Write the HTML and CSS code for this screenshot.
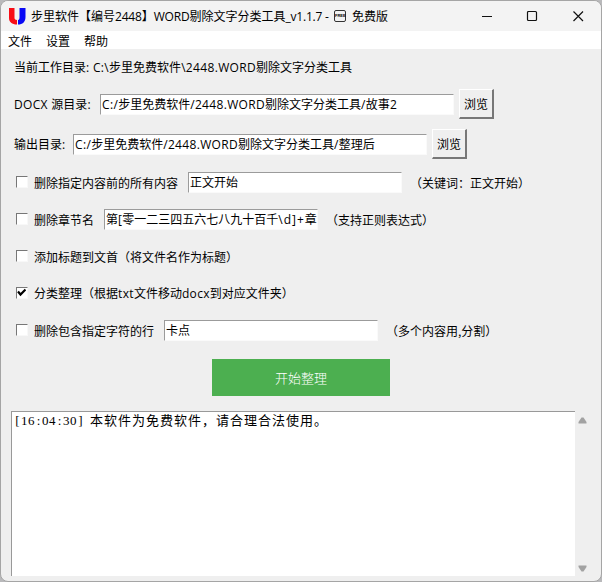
FILE: index.html
```html
<!DOCTYPE html>
<html lang="zh-CN">
<head>
<meta charset="utf-8">
<title>步里软件</title>
<link rel="stylesheet" href="styles.css">
</head>
<body>
<div class="window">
  <header class="titlebar">
    <svg class="logo" width="17" height="17" viewBox="0 0 17 17">
      <path d="M0 0H5.500V10C5.500 11.300 6.500 12 8 12V16.500C3 16.500 0 14 0 10Z" fill="#f80d16"/>
      <path d="M10.500 0H16.500V9C16.500 14 13.500 16.500 9 16.500V12C10.200 12 10.500 11 10.500 9Z" fill="#0909f5"/>
    </svg>
    <span class="title">步里软件【编号<span class="lat">2448</span>】<span class="lat">WORD</span>剔除文字分类工具<span class="lat">_v1.1.7 - </span></span>
    <span class="free">FREE</span>
    <span class="edition">免费版</span>
    <svg class="controls" width="105" height="12" viewBox="0 0 105 12" fill="none" stroke="#111" stroke-width="1.200">
      <path d="M1 6.500H11"/>
      <rect x="46.500" y="1.500" width="9" height="9" rx="1"/>
      <path d="M92.500 1.500L102 11M102 1.500L92.500 11"/>
    </svg>
  </header>
  <nav class="menu"><span>文件</span><span>设置</span><span>帮助</span></nav>
  <main class="content">
    <div class="cwd">当前工作目录<span class="lat">: C:\</span>步里免费软件<span class="lat">\2448.WORD</span>剔除文字分类工具</div>
    <div class="path-row">
      <span class="label-docx"><span class="lat">DOCX </span>源目录<span class="lat">:</span></span>
      <div class="entry path"><span class="lat">C:/</span>步里免费软件<span class="lat">/2448.WORD</span>剔除文字分类工具<span class="lat">/</span>故事<span class="lat">2</span></div>
      <button class="browse">浏览</button>
    </div>
    <div class="path-row">
      <span class="label-out">输出目录<span class="lat">:</span></span>
      <div class="entry path"><span class="lat">C:/</span>步里免费软件<span class="lat">/2448.WORD</span>剔除文字分类工具<span class="lat">/</span>整理后</div>
      <button class="browse">浏览</button>
    </div>
    <div class="options">
      <div class="option"><i class="check"></i><span class="opt-before">删除指定内容前的所有内容</span><div class="entry">正文开始</div><span class="hint">（关键词：正文开始）</span></div>
      <div class="option"><i class="check"></i><span class="opt-chapter">删除章节名</span><div class="entry">第<span class="lat">[</span>零一二三四五六七八九十百千<span class="lat pattern">\d]+</span>章</div><span class="hint">（支持正则表达式）</span></div>
      <div class="option"><i class="check"></i><span>添加标题到文首（将文件名作为标题）</span></div>
      <div class="option"><i class="check"><svg width="9" height="9" viewBox="0 0 9 9"><path d="M1 3.500L3.500 6.500L8.500 1.500" fill="none" stroke="#000" stroke-width="2.200"/></svg></i><span>分类整理（根据<span class="lat">txt</span>文件移动<span class="lat">docx</span>到对应文件夹）</span></div>
      <div class="option"><i class="check"></i><span class="opt-line">删除包含指定字符的行</span><div class="entry">卡点</div><span class="hint">（多个内容用<span class="comma">,</span>分割）</span></div>
    </div>
    <button class="start">开始整理</button>
    <div class="log-area">
      <div class="log"><span class="stamp"><b>[</b>16<b>:</b>04<b>:</b>30<b>]</b></span>本软件为免费软件，请合理合法使用。</div>
      <div class="scrollbar">
        <svg width="9" height="7" viewBox="0 0 9 7"><path d="M3.500 0.500H5.500L8.500 5V6.500H.5V5Z" fill="#a2a2a2"/></svg>
        <svg width="9" height="7" viewBox="0 0 9 7"><path d="M.5 .5H8.500V2L5.500 6.500H3.500L.5 2Z" fill="#a2a2a2"/></svg>
      </div>
    </div>
  </main>
</div>
</body>
</html>
```
FILE: styles.css
```css
* { box-sizing: border-box; }
body {
  margin: 0;
  background: #b9b9bb;
  color: #000;
  font: 12px/20px "Noto Sans CJK SC", sans-serif;
}
.window {
  width: 602px;
  height: 582px;
  display: flex;
  flex-direction: column;
  overflow: hidden;
  white-space: nowrap;
  background: #efefef;
  border: 1px solid #a5a5a5;
  border-radius: 8px;
}
.lat { font-family: "Open Sans", sans-serif; white-space: pre; letter-spacing: 0.34px; }
.titlebar {
  height: 30px;
  flex: none;
  display: flex;
  align-items: center;
  padding-left: 8px;
  background: #f3f3f3;
}
.title { width: 303px; margin-left: 5px; }
.title .lat { letter-spacing: -0.2px; }
.free {
  width: 12px;
  height: 12px;
  border: 1px solid #333;
  border-radius: 2px;
  font: bold 4px/10px "Liberation Sans", sans-serif;
  text-align: center;
}
.edition { margin-left: 6px; }
.controls { margin-left: auto; margin-right: 15px; }
.menu {
  height: 18px;
  flex: none;
  display: flex;
  gap: 14px;
  padding-left: 7px;
  line-height: 19px;
  background: #fff;
}
.content { display: flex; flex-direction: column; flex: 1; padding-left: 13px; }
.cwd { height: 40px; line-height: 36px; }
.path-row { display: flex; align-items: center; height: 30px; margin-bottom: 10px; }
.label-docx { width: 86px; }
.label-out { width: 59px; }
.entry {
  width: 214px;
  height: 21px;
  overflow: hidden;
  padding-left: 1px;
  line-height: 18px;
  background: #fff;
  border: 1px solid #fafafa;
  border-top-color: #9b9b9b;
  border-left-color: #9b9b9b;
}
.path { width: 354px; line-height: 17px; }
.pattern { letter-spacing: 1px; }
button {
  padding: 0;
  color: #000;
  font: inherit;
}
.browse {
  width: 35px;
  height: 30px;
  margin-left: 5px;
  background: #efefef;
  border: solid;
  border-width: 1px 2px 2px 1px;
  border-color: #fff #777 #777 #fff;
}
.options { display: flex; flex-direction: column; gap: 16px; padding-top: 3px; }
.option { display: flex; align-items: center; height: 21px; }
.check {
  width: 12px;
  height: 12px;
  flex: none;
  display: flex;
  margin: 0 6px 1px 2px;
  background: #fff;
  border: 1px solid #f8f8f8;
  border-top-color: #777;
  border-left-color: #777;
}
.opt-before { width: 154px; }
.opt-chapter { width: 70px; }
.opt-line { width: 130px; }
.hint { margin-left: 8px; }
.start {
  width: 178px;
  height: 37px;
  margin: 18px 0 15px 198px;
  color: #fff;
  font-size: 13px;
  font-weight: 300;
  background: #4caf50;
  border: 0;
}
.log-area { display: flex; height: 165px; margin-left: -3px; }
.log {
  width: 564px;
  padding-left: 2px;
  font-size: 13px;
  line-height: 15px;
  letter-spacing: 1px;
  background: #fff;
  border-top: 1px solid #999;
  border-left: 1px solid #999;
}
.stamp {
  margin-right: 6px;
  font-family: "Liberation Serif", serif;
  letter-spacing: 0.500px;
}
.stamp b {
  display: inline-block;
  width: 7px;
  font-weight: normal;
  letter-spacing: 0;
  text-align: center;
}
.scrollbar {
  display: flex;
  flex-direction: column;
  justify-content: space-between;
  padding: 6px 0 4px 3px;
}
```
